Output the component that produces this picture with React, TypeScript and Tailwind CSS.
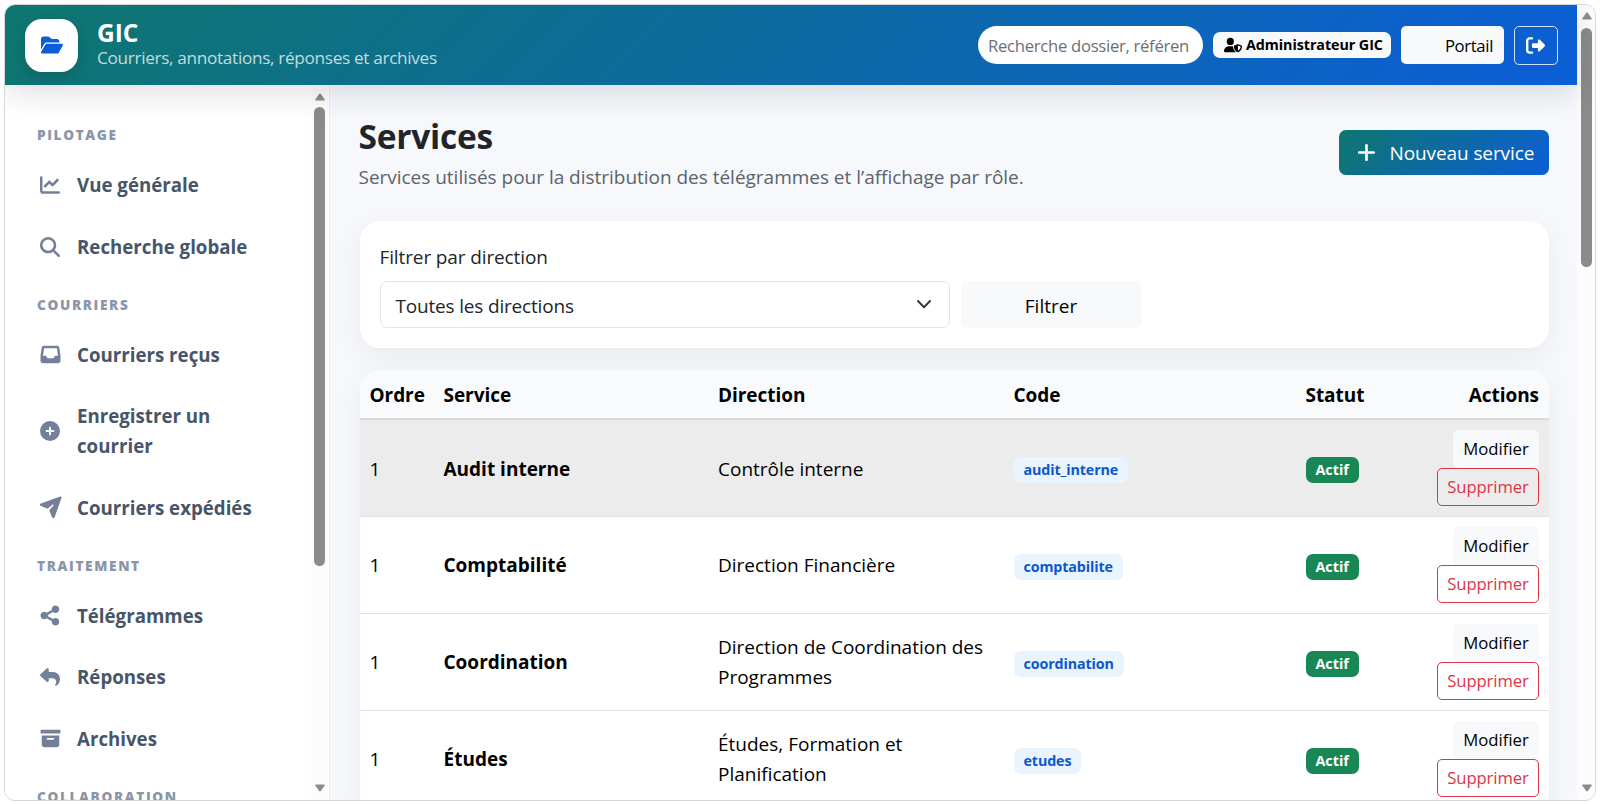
import type { ReactNode } from 'react';
import {
  FaChartLine,
  FaCirclePlus,
  FaFolderOpen,
  FaMagnifyingGlass,
  FaPlus,
  FaReply,
  FaRightFromBracket,
  FaUserShield,
} from 'react-icons/fa6';
import { clsx } from 'clsx';

interface NavItem {
  label: string;
  icon: ReactNode;
}

interface NavSection {
  title: string;
  items: NavItem[];
}

interface Service {
  ordre: number;
  name: string;
  direction: string;
  code: string;
}

// Icônes sur grille 640 : la boîte déborde un peu des 20px de la colonne
function Glyph({ d }: { d: string }) {
  return (
    <svg viewBox="0 0 640 640" className="-m-[2.5px] size-[25px]! fill-current">
      <path d={d} />
    </svg>
  );
}

const INBOX =
  'M155.8 96C123.9 96 96.9 119.4 92.4 150.9L64.6 345.2C64.2 348.2 64 351.2 64 354.3L64 480C64 515.3 92.7 544 128 544L512 544C547.3 544 576 515.3 576 480L576 354.3C576 351.3 575.8 348.2 575.4 345.2L547.6 150.9C543.1 119.4 516.1 96 484.2 96L155.8 96zM155.8 160L484.3 160L511.7 352L451.8 352C439.7 352 428.6 358.8 423.2 369.7L408.9 398.3C403.5 409.1 392.4 416 380.3 416L259.9 416C247.8 416 236.7 409.2 231.3 398.3L217 369.7C211.6 358.9 200.5 352 188.4 352L128.3 352L155.8 160z';
const PLANE =
  'M568.4 37.7C578.2 34.2 589 36.7 596.4 44C603.8 51.3 606.2 62.2 602.7 72L424.7 568.9C419.7 582.8 406.6 592 391.9 592C377.7 592 364.9 583.4 359.6 570.3L295.4 412.3C290.9 401.3 292.9 388.7 300.6 379.7L395.1 267.3C400.2 261.2 399.8 252.3 394.2 246.7C388.6 241.1 379.6 240.7 373.6 245.8L261.2 340.1C252.1 347.7 239.6 349.7 228.6 345.3L70.1 280.8C57 275.5 48.4 262.7 48.4 248.5C48.4 233.8 57.6 220.7 71.5 215.7L568.4 37.7z';
const SHARE =
  'M448 256C501 256 544 213 544 160C544 107 501 64 448 64C395 64 352 107 352 160C352 165.4 352.5 170.8 353.3 176L223.6 248.1C206.7 233.1 184.4 224 160 224C107 224 64 267 64 320C64 373 107 416 160 416C184.4 416 206.6 406.9 223.6 391.9L353.3 464C352.4 469.2 352 474.5 352 480C352 533 395 576 448 576C501 576 544 533 544 480C544 427 501 384 448 384C423.6 384 401.4 393.1 384.4 408.1L254.7 336C255.6 330.8 256 325.5 256 320C256 314.5 255.5 309.2 254.7 304L384.4 231.9C401.3 246.9 423.6 256 448 256z';
const ARCHIVE =
  'M64 128C64 110.3 78.3 96 96 96L544 96C561.7 96 576 110.3 576 128L576 160C576 177.7 561.7 192 544 192L96 192C78.3 192 64 177.7 64 160L64 128zM96 240L544 240L544 480C544 515.3 515.3 544 480 544L160 544C124.7 544 96 515.3 96 480L96 240zM248 304C234.7 304 224 314.7 224 328C224 341.3 234.7 352 248 352L392 352C405.3 352 416 341.3 416 328C416 314.7 405.3 304 392 304L248 304z';

const SECTIONS: NavSection[] = [
  {
    title: 'Pilotage',
    items: [
      { label: 'Vue générale', icon: <FaChartLine /> },
      { label: 'Recherche globale', icon: <FaMagnifyingGlass /> },
    ],
  },
  {
    title: 'Courriers',
    items: [
      { label: 'Courriers reçus', icon: <Glyph d={INBOX} /> },
      { label: 'Enregistrer un courrier', icon: <FaCirclePlus /> },
      { label: 'Courriers expédiés', icon: <Glyph d={PLANE} /> },
    ],
  },
  {
    title: 'Traitement',
    items: [
      { label: 'Télégrammes', icon: <Glyph d={SHARE} /> },
      { label: 'Réponses', icon: <FaReply /> },
      { label: 'Archives', icon: <Glyph d={ARCHIVE} /> },
    ],
  },
  { title: 'Collaboration', items: [] },
];

const SERVICES: Service[] = [
  { ordre: 1, name: 'Audit interne', direction: 'Contrôle interne', code: 'audit_interne' },
  { ordre: 1, name: 'Comptabilité', direction: 'Direction Financière', code: 'comptabilite' },
  { ordre: 1, name: 'Coordination', direction: 'Direction de Coordination des Programmes', code: 'coordination' },
  { ordre: 1, name: 'Études', direction: 'Études, Formation et Planification', code: 'etudes' },
];

const COLUMNS = 'grid grid-cols-[74px_274.5px_295.5px_292px_1fr_auto]';

function Scrollbar({ className, thumb }: { className: string; thumb: string }) {
  return (
    <div className={clsx('flex shrink-0 flex-col items-center bg-[#fcfcfc]', className)}>
      <svg width="10" height="8" viewBox="0 0 10 8" className="shrink-0 fill-[#8b8b8b]">
        <path d="M4.2.9 .4 6.2C0 6.9.4 7.5 1.1 7.5h7.8c.7 0 1.1-.6.7-1.3L5.8.9c-.4-.6-1.2-.6-1.6 0Z" />
      </svg>
      <div className={clsx('shrink-0 rounded-full bg-[#8b8b8b]', thumb)} />
      <svg width="10" height="8" viewBox="0 0 10 8" className="mt-auto shrink-0 fill-[#8b8b8b]">
        <path d="M4.2 7.1.4 1.8C0 1.1.4.5 1.1.5h7.8c.7 0 1.1.6.7 1.3L5.8 7.1c-.4.6-1.2.6-1.6 0Z" />
      </svg>
    </div>
  );
}

function Header() {
  return (
    <header className="relative z-10 flex h-20 shrink-0 items-center bg-[linear-gradient(135deg,#0f766e,#0b5ed7)] pr-[19px] pl-5 shadow-[0_10px_30px_rgba(15,23,42,0.12)]">
      <div className="flex size-[53px] items-center justify-center rounded-[17px] bg-white shadow-[0_6px_16px_rgba(0,0,0,0.14)]">
        <FaFolderOpen className="h-5 w-[22px] text-[#0b5ed7]" />
      </div>
      <div className="ml-[19px] flex flex-col">
        <span className="text-[24.5px] leading-[25px] font-bold text-white">GIC</span>
        <span className="text-[17.2px] leading-[25px] tracking-[-0.32px] text-white/75">
          Courriers, annotations, réponses et archives
        </span>
      </div>
      <div className="ml-auto flex items-center gap-2.5">
        <div className="h-[38px] w-[225px] rounded-full bg-white pl-2.5 text-[16.7px] leading-[39px] tracking-[-0.3px] whitespace-nowrap text-[#6c7075]">
          Recherche dossier, référen
        </div>
        <div className="flex h-[26px] w-[178px] items-center gap-1 rounded-[7px] bg-[#f8f9fa] pl-[11px] text-[14.3px] font-bold tracking-[-0.06px] whitespace-nowrap text-black">
          <FaUserShield className="h-4 w-[18px]" />
          Administrateur GIC
        </div>
        <div className="flex h-[38px] w-[103px] items-center justify-end rounded-[5px] bg-[#f8f9fa] pt-px pr-[11px] text-[16.7px] tracking-[-0.35px] text-black">
          Portail
        </div>
        <div className="flex h-[39px] w-11 items-center justify-center rounded-[5px] border border-white/80 pr-px text-white">
          <FaRightFromBracket className="size-[19px]" />
        </div>
      </div>
    </header>
  );
}

function Sidebar() {
  return (
    <aside className="flex w-[325px] shrink-0 border-r border-[#eceef1] bg-white">
      <nav className="w-[306px] shrink-0 overflow-hidden pt-[23.3px] pl-8">
        {SECTIONS.map((section) => (
          <div key={section.title}>
            <div className="h-[46px] pt-[17px] text-[13.6px] leading-5 font-extrabold tracking-[1.65px] text-[#8a96a8] uppercase">
              {section.title}
            </div>
            {section.items.map(({ label, icon }) => (
              <div
                key={label}
                className="flex items-center py-[15.85px] pr-14 pl-[3px] text-[18.7px] leading-[30px] font-bold text-[#475569]"
              >
                <span className="mr-[17px] flex size-5 shrink-0 items-center justify-center text-[#74809a] [&>svg]:size-5 [&>svg]:shrink-0">
                  {icon}
                </span>
                {label}
              </div>
            ))}
          </div>
        ))}
      </nav>
      <Scrollbar className="w-[17px] pt-2 pb-2" thumb="mt-1.5 h-[459px] w-[11px]" />
    </aside>
  );
}

function Badge({ className, children }: { className: string; children: ReactNode }) {
  return (
    <span className={clsx('inline-flex h-[26px] items-center rounded-[7px] px-2.5 text-[14.3px] font-bold', className)}>
      {children}
    </span>
  );
}

function ServiceRow({ service, hovered }: { service: Service; hovered: boolean }) {
  return (
    <div
      className={clsx(
        COLUMNS,
        'h-[96.8px] items-center border-b border-[#e1e4e7] px-2.5 text-[19px] leading-[30px] text-black',
        hovered ? 'bg-[#ececec]' : 'bg-white',
      )}
    >
      <span className="pt-px">{service.ordre}</span>
      <span className="pt-px font-bold">{service.name}</span>
      <span className="pt-px pr-5">{service.direction}</span>
      <span className="flex pt-1">
        <Badge className="bg-[#eaf4ff] tracking-[-0.13px] text-[#0a58ca]">{service.code}</Badge>
      </span>
      <span className="flex pt-1">
        <Badge className="bg-[#198754] text-white">Actif</Badge>
      </span>
      <div className="flex flex-col items-end text-[16.7px]">
        <div className="flex h-[38px] w-[86px] items-center justify-center rounded-[5px] bg-[#f8f9fa]">Modifier</div>
        <div className="flex h-[38px] w-[102px] items-center justify-center rounded-[5px] border border-[#dc3545] tracking-[-0.1px] text-[#dc3545]">
          Supprimer
        </div>
      </div>
    </div>
  );
}

function ServicesPage() {
  return (
    <main className="flex-1 overflow-hidden bg-[#f6f8fc] pt-[31px] pr-7 pl-[29.5px]">
      <div className="flex h-[75px] items-start justify-between">
        <div className="-ml-px">
          <h1 className="text-[33.5px] leading-10 font-bold tracking-[-0.25px] text-[#212529]">Services</h1>
          <p className="mt-[5.5px] text-[19px] leading-[30px] tracking-[-0.02px] text-[#5c636a]">
            Services utilisés pour la distribution des télégrammes et l’affichage par rôle.
          </p>
        </div>
        <button className="mt-[13.5px] flex h-[45px] w-[210px] items-center rounded-[7px] bg-[linear-gradient(135deg,#0f766e,#0b5ed7)] pt-0.5 pl-[17px] text-[19px] tracking-[-0.1px] text-white">
          <FaPlus className="mr-[12.5px] mb-px size-[21px]" />
          Nouveau service
        </button>
      </div>

      {/* Filtre par direction */}
      <section className="mt-[30px] h-[127px] rounded-[20px] bg-white pt-[21px] pl-5 text-[19px] text-[#212529] shadow-[0_8px_30px_rgba(15,23,42,0.06)]">
        <div className="leading-[30px] tracking-[-0.12px]">Filtrer par direction</div>
        <div className="mt-[9px] flex gap-[11px]">
          <div className="flex h-[47px] w-[570px] items-center justify-between rounded-[7px] border border-[#e2e5e9] pr-[18px] pl-[15px] tracking-[-0.18px]">
            <span className="pt-[3px]">Toutes les directions</span>
            <svg width="14" height="9" viewBox="0 0 14 9" fill="none" className="stroke-[#343a40]">
              <path d="m1 1 6 6.2L13 1" strokeWidth="2" strokeLinecap="round" strokeLinejoin="round" />
            </svg>
          </div>
          <div className="flex h-[47px] w-[181px] items-center justify-center rounded-[7px] bg-[#f8f9fa] pt-[3px] text-black">
            Filtrer
          </div>
        </div>
      </section>

      {/* Tableau des services */}
      <section className="mt-[22px] overflow-hidden rounded-t-[20px] bg-white shadow-[0_8px_30px_rgba(15,23,42,0.06)]">
        <div
          className={clsx(
            COLUMNS,
            'h-[50.3px] items-center border-b-2 border-[#d8dadc] bg-[#f8fafc] px-2.5 pt-[3px] text-[19px] font-bold tracking-[-0.05px] text-black',
          )}
        >
          <span>Ordre</span>
          <span>Service</span>
          <span>Direction</span>
          <span>Code</span>
          <span>Statut</span>
          <span className="text-right">Actions</span>
        </div>
        {SERVICES.map((service, i) => (
          <ServiceRow key={service.code} service={service} hovered={i === 0} />
        ))}
      </section>
    </main>
  );
}

export default function App() {
  return (
    <div className="h-[804px] w-[1600px] bg-white px-1 pt-1 pb-[3px] font-['Open_Sans',sans-serif]">
      <div className="flex h-full overflow-hidden rounded-[11px] border border-[#d4d6d8]">
        <div className="flex w-[1572px] shrink-0 flex-col">
          <Header />
          <div className="flex min-h-0 flex-1">
            <Sidebar />
            <ServicesPage />
          </div>
        </div>
        <Scrollbar className="flex-1 pt-[7px] pb-2 pl-px" thumb="mt-2 h-[239px] w-[11px]" />
      </div>
    </div>
  );
}
